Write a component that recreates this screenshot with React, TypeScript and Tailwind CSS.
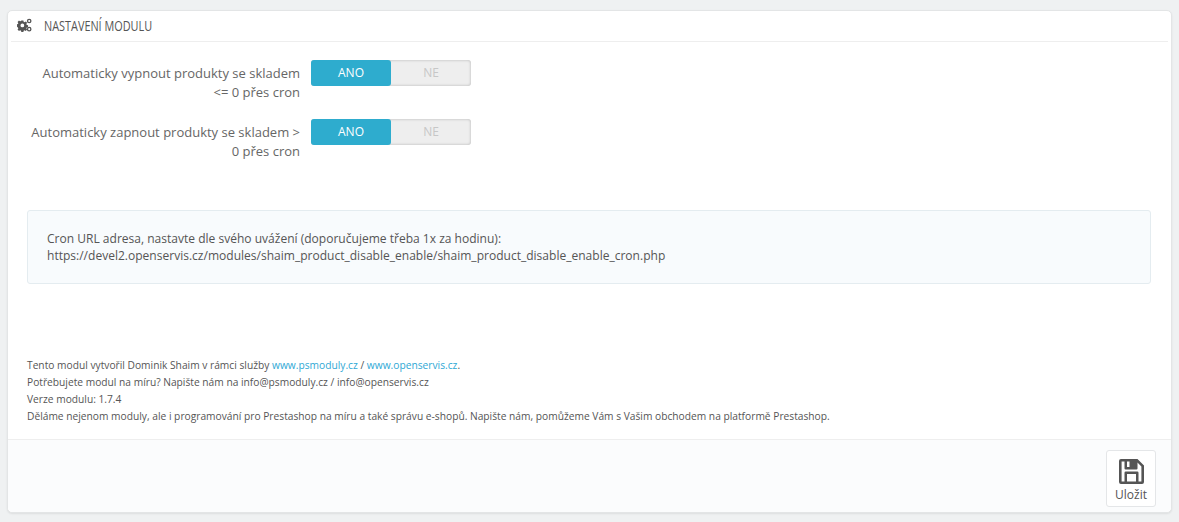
import React from "react";

function Gears() {
  return (
    <svg width="15" height="14" viewBox="0 0 16 14" className="shrink-0">
      <g fill="#555">
        <path fillRule="evenodd" d="M4.600 2.200h2.200l.3 1.400 1 .4 1.200-.8 1.500 1.500-.8 1.200.4 1 1.400.3v2.200l-1.400.3-.4 1 .8 1.200-1.500 1.500-1.200-.8-1 .4-.3 1.400H4.600l-.3-1.400-1-.4-1.200.8-1.500-1.500.8-1.200-.4-1L-.4 8.500v-2.200l1.400-.3.4-1-.8-1.200 1.500-1.500 1.200.8 1-.4zM5.700 5.400a2 2 0 1 0 0 4 2 2 0 0 0 0-4z" />
        <path fillRule="evenodd" d="M13 0.200a2.500 2.500 0 1 1 0 5 2.500 2.500 0 0 1 0-5zM13 1.600a1.100 1.100 0 1 0 0 2.200 1.100 1.100 0 0 0 0-2.200z" />
        <path fillRule="evenodd" d="M13 8.900a2.500 2.500 0 1 1 0 5 2.500 2.500 0 0 1 0-5zM13 10.300a1.100 1.100 0 1 0 0 2.200 1.100 1.100 0 0 0 0-2.200z" />
      </g>
    </svg>
  );
}

function Save() {
  return (
    <svg width="25" height="25" viewBox="0 0 25 25">
      <path
        fillRule="evenodd"
        fill="#555"
        d="M2 0h16.500L25 6.500V23a2 2 0 0 1-2 2H2a2 2 0 0 1-2-2V2a2 2 0 0 1 2-2zM5.500 2.600H2.600v19.800h2.900v-8.700a1.200 1.200 0 0 1 1.200-1.200h11.600a1.200 1.200 0 0 1 1.200 1.200v8.700h2.900V7.600l-3.900-4.200V9.500a1 1 0 0 1-1 1h-11a1 1 0 0 1-1-1zM8 15v7.400h9V15zM8 2.600V8h2.500V2.600z"
      />
    </svg>
  );
}

function Row({ a, b }: { a: string; b: string }) {
  return (
    <div className="flex items-start">
      <div className="w-[292px] text-right text-[13px] leading-[20px] text-[#666] pt-[3px]">
        <div>{a}</div>
        <div className="mt-[-1px]">{b}</div>
      </div>
      <div className="ml-[11px] flex h-[26px] w-[160px] rounded-[3px] bg-[#eeeeee] shadow-[inset_0_0_3px_rgba(0,0,0,0.25)] text-[12px]">
        <div className="flex w-[80px] items-center justify-center rounded-[3px] bg-[#2eacce] text-white">ANO</div>
        <div className="flex w-[80px] items-center justify-center text-[#c7c7c7]">NE</div>
      </div>
    </div>
  );
}

export default function App() {
  return (
    <div
      className="h-[522px] overflow-hidden bg-[#eff1f2] pt-[10px] pl-[7px] pr-[7px]"
      style={{ fontFamily: '"Open Sans", sans-serif' }}
    >
      <div className="flex h-[503px] flex-col rounded-[5px] border border-[#e3e5e6] bg-white shadow-[0_1px_2px_rgba(0,0,0,0.08)]">
        <div className="mx-[3px] flex h-[31px] items-center gap-[12px] border-b border-[#eeeeee] pb-[2px] pl-[6px]">
          <Gears />
          <span className="origin-left scale-x-[0.725] text-[15px] font-medium leading-[20px] text-[#555] whitespace-nowrap">
            NASTAVENÍ MODULU
          </span>
        </div>

        <div className="flex flex-1 flex-col">
          <div className="flex flex-col gap-[17px] pt-[18px]">
            <Row a="Automaticky vypnout produkty se skladem" b="<= 0 přes cron" />
            <Row a="Automaticky zapnout produkty se skladem >" b="0 přes cron" />
          </div>

          <div className="ml-[19px] mr-[20px] mt-[49px] flex h-[74px] flex-col justify-center rounded-[3px] border border-[#e4ecf0] bg-[#f8fbfd] pl-[19px] text-[12.04px] leading-[17px] text-[#555]">
            <div>Cron URL adresa, nastavte dle svého uvážení (doporučujeme třeba 1x za hodinu):</div>
            <div>https://devel2.openservis.cz/modules/shaim_product_disable_enable/shaim_product_disable_enable_cron.php</div>
          </div>

          <div className="ml-[19px] mt-[73px] text-[10.23px] leading-[17px] text-[#555]">
            <div>
              Tento modul vytvořil Dominik Shaim v rámci služby <span className="text-[#2fa8d5]">www.psmoduly.cz</span> /{" "}
              <span className="text-[#2fa8d5]">www.openservis.cz</span>.
            </div>
            <div>Potřebujete modul na míru? Napište nám na info@psmoduly.cz / info@openservis.cz</div>
            <div>Verze modulu: 1.7.4</div>
            <div>
              Děláme nejenom moduly, ale i programování pro Prestashop na míru a také správu e-shopů. Napište nám, pomůžeme Vám s Vašim obchodem na platformě Prestashop.
            </div>
          </div>
        </div>

        <div className="flex h-[73px] justify-end rounded-b-[5px] border-t border-[#eeeeee] bg-[#fbfcfd] pr-[15px] pt-[10px]">
          <div className="flex h-[57px] w-[50px] flex-col items-center rounded-[3px] border border-[#e4e6e8] bg-white pt-[8px] text-[12px] leading-[16px] text-[#555]">
            <Save />
            <span className="mt-[3px]">Uložit</span>
          </div>
        </div>
      </div>
    </div>
  );
}
